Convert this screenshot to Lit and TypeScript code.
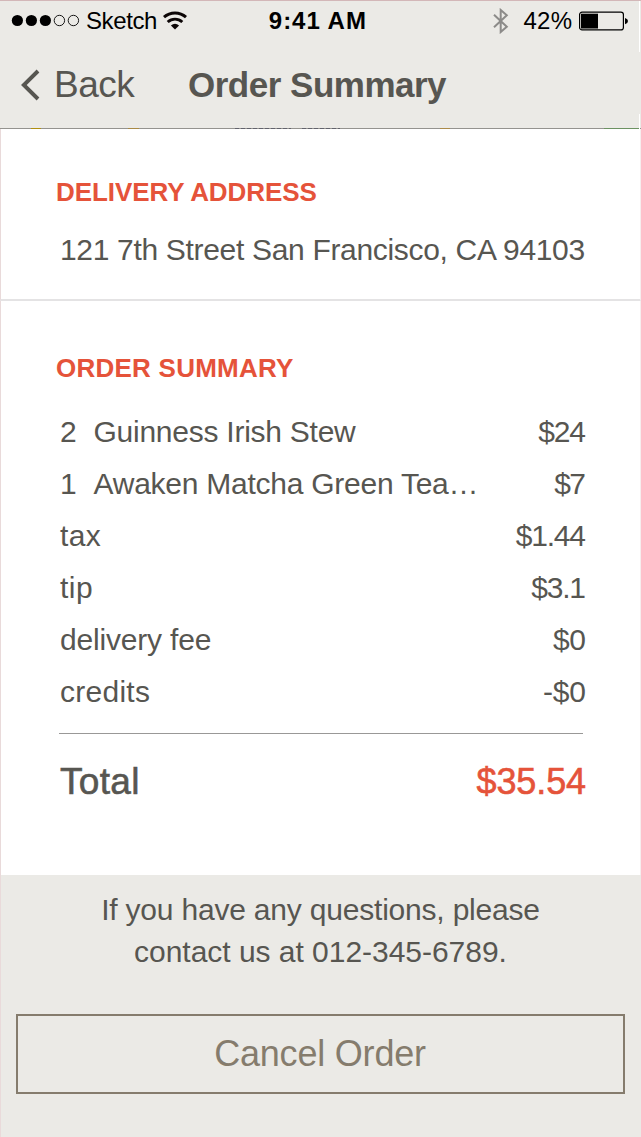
import { LitElement, html, css } from "lit";
import { customElement, property } from "lit/decorators.js";
import { styleMap } from "lit/directives/style-map.js";

interface Line {
  qty?: string;
  label: string;
  price: string;
  labelTracking: number;
  priceTracking: number;
}

const LINES: Line[] = [
  { qty: "2", label: "Guinness Irish Stew", price: "$24", labelTracking: -0.25, priceTracking: -1.2 },
  { qty: "1", label: "Awaken Matcha Green Tea…", price: "$7", labelTracking: -0.25, priceTracking: -1.5 },
  { label: "tax", price: "$1.44", labelTracking: 0.4, priceTracking: -1.2 },
  { label: "tip", price: "$3.1", labelTracking: 0.5, priceTracking: -1.2 },
  { label: "delivery fee", price: "$0", labelTracking: -0.18, priceTracking: -0.38 },
  { label: "credits", price: "-$0", labelTracking: 0.27, priceTracking: -0.2 },
];

@customElement("status-bar")
class StatusBar extends LitElement {
  static styles = css`
    :host {
      display: flex;
      align-items: center;
      height: 40px;
      font-size: 24px;
      line-height: 40px;
      color: #000;
      white-space: nowrap;
    }
    svg { display: block; flex: none; }
    .side { flex: 1; display: flex; align-items: center; }
    .left { padding-left: 11px; }
    .right { justify-content: flex-end; padding-right: 12px; }
    .carrier { margin: 0 5.600px 0 6px; letter-spacing: -0.4px; }
    .clock { width: 98px; font-weight: 700; letter-spacing: 0.99px; }
    .level { margin: 0 6.500px 0 14px; letter-spacing: 0.35px; }
    .wide { flex: none; width: 268.800px; box-sizing: border-box; }
  `;
  render() {
    return html`
      <div class="side left wide">
        <svg width="69" height="14" viewBox="0 0 69 14">
          <circle cx="6.4" cy="6.5" r="5.6" />
          <circle cx="20.4" cy="6.5" r="5.6" />
          <circle cx="34.4" cy="6.5" r="5.6" />
          <circle cx="48.4" cy="6.5" r="5.2" fill="none" stroke="#000" stroke-width=".9" />
          <circle cx="62.4" cy="6.5" r="5.2" fill="none" stroke="#000" stroke-width=".9" />
        </svg>
        <span class="carrier">Sketch</span>
        <svg width="24" height="20" viewBox="0 0 24 20" fill="none" stroke="#0c0606">
          <path d="M1 6.200C7.200 .6 16.800 .6 23 6.200" stroke-width="3" />
          <path d="M4.700 11C9 7.100 15 7.100 19.300 11" stroke-width="2.900" />
          <path d="M7.900 14.600Q12 10.800 16.100 14.600L12 18.600Z" fill="#0c0606" stroke="none" />
        </svg>
      </div>
      <span class="clock">9:41 AM</span>
      <div class="side right">
        <svg width="16" height="26" viewBox="0 0 16 26" fill="none" stroke="#8c8b89" stroke-width="2">
          <path d="M1 6.800L13.800 18.700L7.700 24V2L13.800 7.300L1 19.200" />
        </svg>
        <span class="level">42%</span>
        <svg width="50" height="20" viewBox="0 0 50 20">
          <rect x=".6" y="1.100" width="43.800" height="17.800" rx="2.500" fill="none" stroke="#000" stroke-width="1.200" />
          <rect x="2" y="2.700" width="17" height="14.800" />
          <path d="M46 7Q49 7.800 49 10T46 13.300Z" />
        </svg>
      </div>
    `;
  }
}

@customElement("order-line")
class OrderLine extends LitElement {
  @property({ attribute: false }) line!: Line;
  static styles = css`
    :host {
      display: flex;
      justify-content: space-between;
      height: 52px;
      line-height: 52px;
      font-size: 30px;
      white-space: nowrap;
    }
    .name { display: flex; }
    .qty { width: 33.500px; }
  `;
  render() {
    const l = this.line;
    return html`
      <div class="name">
        ${l.qty ? html`<span class="qty">${l.qty}</span>` : ""}
        <span style=${styleMap({ letterSpacing: `${l.labelTracking}px` })}>${l.label}</span>
      </div>
      <span style=${styleMap({ letterSpacing: `${l.priceTracking}px`, marginRight: `${-l.priceTracking}px` })}>${l.price}</span>
    `;
  }
}

@customElement("app-root")
class AppRoot extends LitElement {
  static styles = css`
    :host {
      display: block;
      box-sizing: border-box;
      width: 641px;
      height: 1137px;
      overflow: hidden;
      position: relative;
      background: #ebeae6;
      color: #575651;
      font-family: "Liberation Sans", Arial, sans-serif;
    }
    .header { height: 128px; box-sizing: border-box; border-top: 1px solid #d3b7b8; }
    .nav { display: flex; height: 87px; line-height: 87px; align-items: center; white-space: nowrap; }
    .chevron { display: block; margin-left: 21px; }
    .back { width: 134px; margin-left: 13px; font-size: 37px; letter-spacing: -0.5px; }
    .title { font-size: 35px; font-weight: 700; letter-spacing: -0.5px; }
    .sliver {
      height: 1px;
      background:
        linear-gradient(#b08f10, #b08f10) 31px 0 / 10px 1px no-repeat,
        linear-gradient(#a98a45, #a98a45) 128px 0 / 11px 1px no-repeat,
        repeating-linear-gradient(90deg, #62636d 0 4px, #92918d 4px 6px) 235px 0 / 56px 1px no-repeat,
        repeating-linear-gradient(90deg, #62636d 0 4px, #92918d 4px 6px) 302px 0 / 38px 1px no-repeat,
        linear-gradient(#ab8b4a, #ab8b4a) 440px 0 / 10px 1px no-repeat,
        linear-gradient(#6c9262, #6c9262) 604px 0 / 35px 1px no-repeat,
        #94938f;
    }
    .panel { box-sizing: border-box; background: #fff; border-left: 1px solid #e9dada; border-right: 1px solid #f6eeee; }
    .address { height: 172px; padding: 43px 0 0 55px; border-bottom: 2px solid #e4e3e4; }
    .heading { height: 40px; line-height: 40px; font-size: 26px; font-weight: 700; color: #e5533a; letter-spacing: -0.08px; white-space: nowrap; }
    .heading.order { letter-spacing: 0.24px; margin-left: -4px; }
    .street { margin: 13px 0 0 4px; line-height: 50px; font-size: 30px; letter-spacing: -0.32px; white-space: nowrap; }
    .summary { height: 574px; padding: 47px 54px 0 59px; }
    .lines { padding-top: 18px; }
    .rule { height: 1px; margin: 15px 3px 0 -1px; background: #999897; }
    .total { display: flex; justify-content: space-between; margin-top: 27px; line-height: 42px; font-size: 37px; }
    .total-label { letter-spacing: 0.3px; -webkit-text-stroke: 0.6px #575651; }
    .total-price { font-size: 36px; letter-spacing: -0.1px; color: #e5533a; -webkit-text-stroke: 0.6px #e5533a; }
    .footer { height: 262px; box-sizing: border-box; padding-top: 14px; border-left: 1px solid #e9dada; }
    .help { line-height: 42px; font-size: 30px; text-align: center; white-space: nowrap; padding-right: 1px; }
    .help div:first-child { letter-spacing: -0.2px; }
    .help div:last-child { letter-spacing: -0.03px; }
    .cancel {
      display: block;
      box-sizing: border-box;
      width: 609px;
      height: 80px;
      margin: 41px 0 0 15px;
      padding: 0 1px 1px 0;
      border: 2px solid #857c6d;
      border-radius: 0;
      background: none;
      color: #857c6d;
      font: 36px "Liberation Sans", Arial, sans-serif;
      letter-spacing: -0.2px;
    }
    .edge { position: absolute; left: 639px; width: 1px; background: #fff; }
    .edge.upper { top: 1px; height: 51px; }
    .edge.lower { top: 114px; height: 15px; }
  `;
  render() {
    return html`
      <div class="header">
        <status-bar></status-bar>
        <div class="nav">
          <svg class="chevron" width="20" height="32" viewBox="0 0 20 32" fill="none" stroke="#575651" stroke-width="3.900">
            <path d="M17 2L2.800 16L17 30" />
          </svg>
          <span class="back">Back</span>
          <span class="title">Order Summary</span>
        </div>
      </div>
      <div class="sliver"></div>
      <section class="panel address">
        <div class="heading">DELIVERY ADDRESS</div>
        <div class="street">121 7th Street San Francisco, CA 94103</div>
      </section>
      <section class="panel summary">
        <div class="heading order">ORDER SUMMARY</div>
        <div class="lines">${LINES.map((line) => html`<order-line .line=${line}></order-line>`)}</div>
        <div class="rule"></div>
        <div class="total">
          <span class="total-label">Total</span>
          <span class="total-price">$35.54</span>
        </div>
      </section>
      <section class="footer">
        <div class="help">
          <div>If you have any questions, please</div>
          <div>contact us at 012-345-6789.</div>
        </div>
        <button class="cancel">Cancel Order</button>
      </section>
      <div class="edge upper"></div>
      <div class="edge lower"></div>
    `;
  }
}
